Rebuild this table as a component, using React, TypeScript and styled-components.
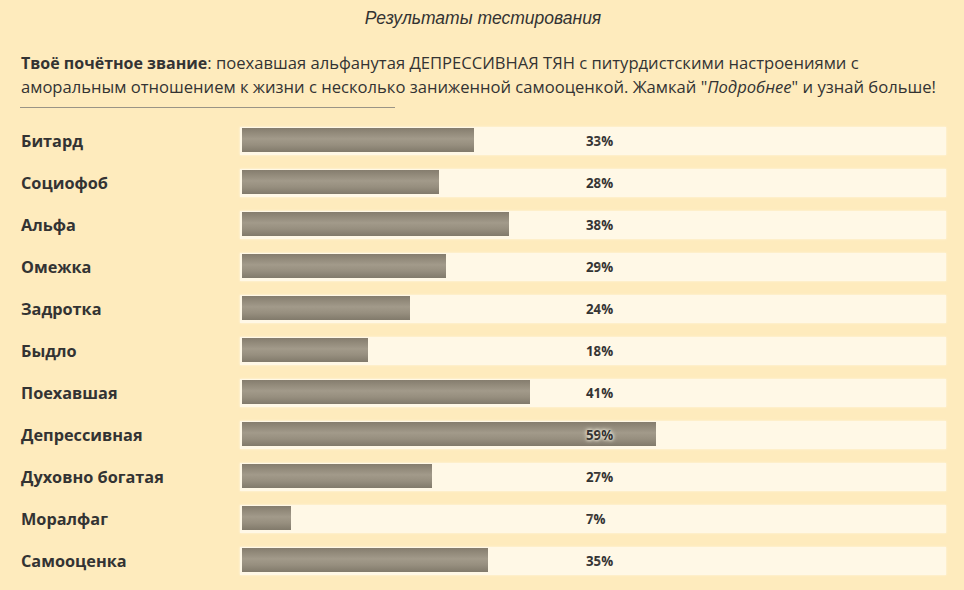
import React from "react";
import styled, { createGlobalStyle } from "styled-components";

const GlobalStyle = createGlobalStyle`
  html, body {
    margin: 0;
    padding: 0;
    background: #feebbd;
  }
  body {
    font-family: "Open Sans", "Noto Sans", sans-serif;
    color: #333;
  }
`;

type Score = { name: string; value: number };

const scores: Score[] = [
  { name: "Битард", value: 33 },
  { name: "Социофоб", value: 28 },
  { name: "Альфа", value: 38 },
  { name: "Омежка", value: 29 },
  { name: "Задротка", value: 24 },
  { name: "Быдло", value: 18 },
  { name: "Поехавшая", value: 41 },
  { name: "Депрессивная", value: 59 },
  { name: "Духовно богатая", value: 27 },
  { name: "Моралфаг", value: 7 },
  { name: "Самооценка", value: 35 },
];

const App = () => {
  return (
    <Page>
      <GlobalStyle />
      <Title>Результаты тестирования</Title>
      <Summary>
        <strong>Твоё почётное звание</strong>: поехавшая альфанутая ДЕПРЕССИВНАЯ
        ТЯН с питурдистскими настроениями с аморальным отношением к жизни с
        несколько заниженной самооценкой. Жамкай "<em>Подробнее</em>" и узнай
        больше!
      </Summary>
      <Divider />
      <ScoreList>
        {scores.map((s) => (
          <ScoreRow key={s.name}>
            <Label>{s.name}</Label>
            <Track>
              <Fill style={{ width: `${s.value}%` }} />
              <Percent>{s.value}%</Percent>
            </Track>
          </ScoreRow>
        ))}
      </ScoreList>
    </Page>
  );
};

const Page = styled.div`
  width: 964px;
  height: 590px;
  box-sizing: border-box;
  padding: 6px 18px 0 20px;
  overflow: hidden;
`;

const Title = styled.div`
  font-family: "Liberation Sans", Arial, sans-serif;
  font-style: italic;
  font-size: 17.5px;
  text-align: center;
  line-height: 25px;
`;

const Summary = styled.p`
  margin: 20px 0 0 1px;
  font-size: 16.6px;
  line-height: 23px;
  strong {
    font-size: 16px;
    font-weight: 700;
  }
`;

const Divider = styled.hr`
  width: 375px;
  margin: 9px 0 0 0;
  border: none;
  border-top: 1px solid #9a9486;
`;

const ScoreList = styled.div`
  display: flex;
  flex-direction: column;
  gap: 14px;
  margin-top: 19px;
`;

const ScoreRow = styled.div`
  display: flex;
  align-items: center;
  height: 28px;
`;

const Label = styled.div`
  width: 219px;
  padding-left: 1px;
  font-size: 16.3px;
  font-weight: 700;
`;

const Track = styled.div`
  position: relative;
  flex: 1;
  height: 28px;
  box-sizing: border-box;
  padding: 1px 2px 3px 2px;
  background: #fff8e6;
  box-shadow: 0 0 2px #fff8e6;
`;

const Fill = styled.div`
  height: 24px;
  background: linear-gradient(
    to bottom,
    #857d6e 0%,
    #a29a8a 45%,
    #978f7f 70%,
    #817a6b 100%
  );
`;

const Percent = styled.span`
  position: absolute;
  left: 346px;
  top: 0;
  line-height: 28px;
  font-size: 13.3px;
  font-weight: 700;
  color: #333;
  text-shadow: 0 0 5px #fff8e6, 0 0 3px #fff8e6;
`;

export default App;
